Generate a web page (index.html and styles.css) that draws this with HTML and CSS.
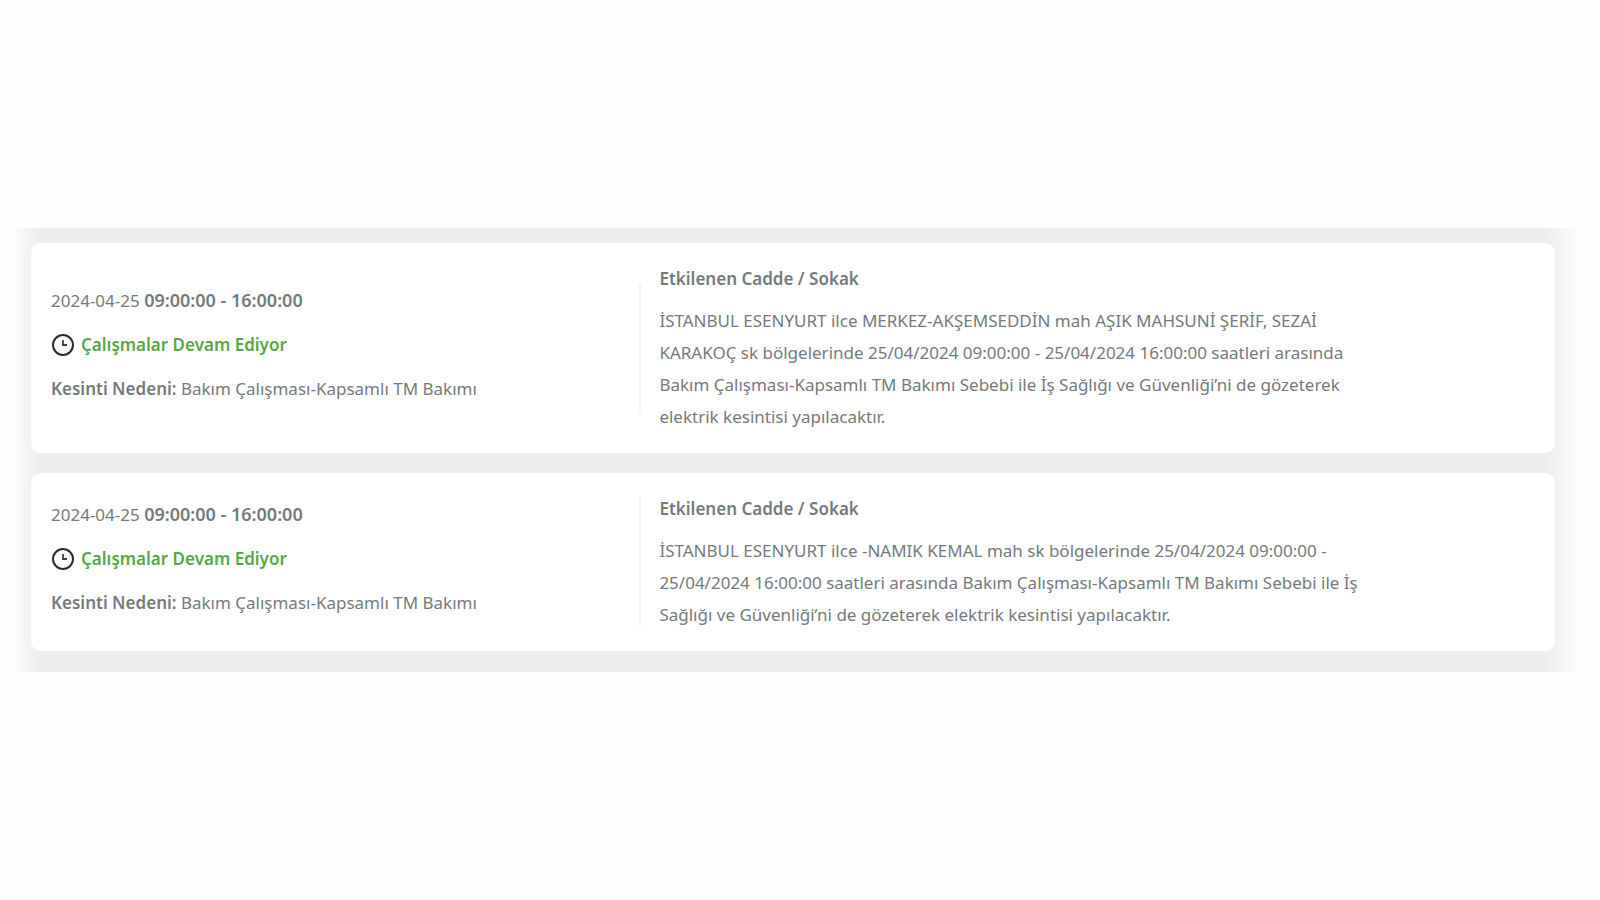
FILE: index.html
```html
<!DOCTYPE html>
<html lang="tr">
<head>
  <meta charset="UTF-8" />
  <meta name="viewport" content="width=device-width, initial-scale=1.0" />
  <title>Planlı Kesintiler</title>
  <link rel="stylesheet" href="styles.css">
</head>
<body>
  <main class="outages">
    <article class="card">
      <div class="summary">
        <p class="time">2024-04-25 <strong>09:00:00 - 16:00:00</strong></p>
        <p class="status">
          <svg class="clock" viewBox="0 0 24 24" aria-hidden="true">
            <circle cx="12" cy="12" r="10" fill="none" stroke="#2b2b30" stroke-width="2" />
            <path d="M12 7v6" stroke="#8a3f50" stroke-width="2" />
            <path d="M11 12h5" stroke="#4a3a45" stroke-width="2" />
          </svg>
          Çalışmalar Devam Ediyor
        </p>
        <p><strong>Kesinti Nedeni:</strong> Bakım Çalışması-Kapsamlı TM Bakımı</p>
      </div>
      <div class="streets">
        <h2>Etkilenen Cadde / Sokak</h2>
        <p>
          İSTANBUL ESENYURT ilce MERKEZ-AKŞEMSEDDİN mah AŞIK MAHSUNİ ŞERİF, SEZAİ<br />
          KARAKOÇ sk bölgelerinde 25/04/2024 09:00:00 - 25/04/2024 16:00:00 saatleri arasında<br />
          Bakım Çalışması-Kapsamlı TM Bakımı Sebebi ile İş Sağlığı ve Güvenliği’ni de gözeterek<br />
          elektrik kesintisi yapılacaktır.
        </p>
      </div>
    </article>

    <article class="card">
      <div class="summary">
        <p class="time">2024-04-25 <strong>09:00:00 - 16:00:00</strong></p>
        <p class="status">
          <svg class="clock" viewBox="0 0 24 24" aria-hidden="true">
            <circle cx="12" cy="12" r="10" fill="none" stroke="#2b2b30" stroke-width="2" />
            <path d="M12 7v6" stroke="#8a3f50" stroke-width="2" />
            <path d="M11 12h5" stroke="#4a3a45" stroke-width="2" />
          </svg>
          Çalışmalar Devam Ediyor
        </p>
        <p><strong>Kesinti Nedeni:</strong> Bakım Çalışması-Kapsamlı TM Bakımı</p>
      </div>
      <div class="streets">
        <h2>Etkilenen Cadde / Sokak</h2>
        <p>
          İSTANBUL ESENYURT ilce -NAMIK KEMAL mah sk bölgelerinde 25/04/2024 09:00:00 -<br />
          25/04/2024 16:00:00 saatleri arasında Bakım Çalışması-Kapsamlı TM Bakımı Sebebi ile İş<br />
          Sağlığı ve Güvenliği’ni de gözeterek elektrik kesintisi yapılacaktır.
        </p>
      </div>
    </article>
  </main>
</body>
</html>
```

FILE: styles.css
```css
:root {
  --text: #757b7c;
  --green: #55a845;
  --shade: #ededed;
}

* {
  box-sizing: border-box;
}

body {
  margin: 0;
  min-height: 100vh;
  display: flex;
  align-items: center;
  background: #fefefe;
  color: var(--text);
  font-family: "Noto Sans", "Open Sans", sans-serif;
  font-size: 17px;
  line-height: 32px;
}

h2,
p {
  margin: 0;
}

h2,
strong {
  font-size: inherit;
  font-weight: 600;
}

/* ----------- LIST ----------- */
.outages {
  flex: 1;
  display: flex;
  flex-direction: column;
  gap: 20px;
  margin: 0 15px;
  padding: 15px 30px 21px 16px;
  /* soft shade that fades out at both sides */
  background: linear-gradient(to right, #fafafa, #f2f2f2 16px, var(--shade) 28px, var(--shade) calc(100% - 42px), #f2f2f2 calc(100% - 30px), #fefefe calc(100% - 4px));
}

/* ----------- CARD ----------- */
.card {
  display: grid;
  grid-template-columns: 2fr 3fr;
  gap: 8px;
  align-items: center;
  padding: 20px;
  border-radius: 10px;
  background: #fff;
}

.summary {
  display: flex;
  flex-direction: column;
  gap: 12px;
  padding-bottom: 8px;
  border-right: 2px solid #f3f3f3;
}

.time strong {
  font-size: 18px;
}

.status {
  display: flex;
  align-items: center;
  gap: 6px;
  color: var(--green);
  font-weight: 600;
}

.clock {
  width: 24px;
  height: 24px;
}

.streets {
  padding-left: 10px;
}

.streets h2 {
  margin-bottom: 10px;
}
```
